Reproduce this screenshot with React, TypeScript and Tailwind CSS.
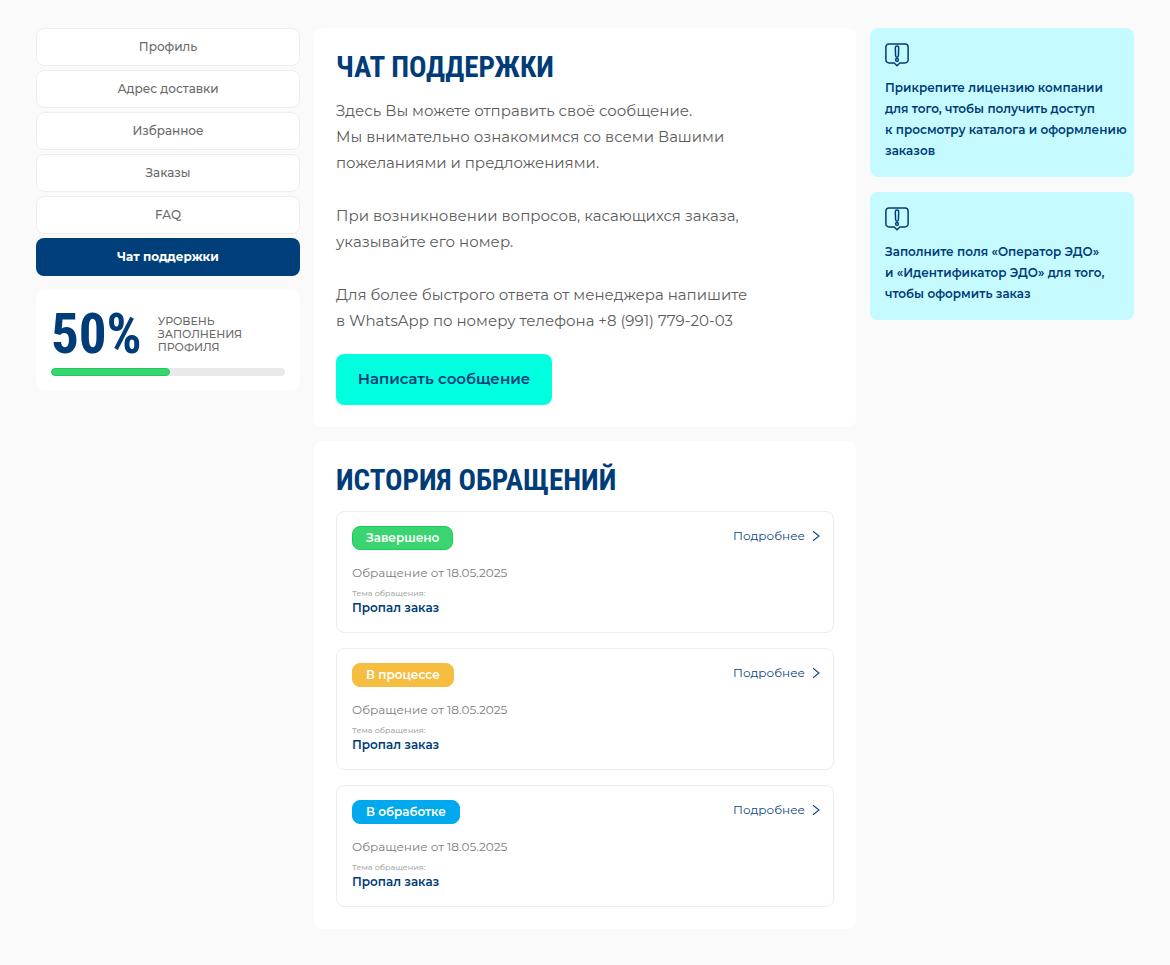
const navItems = ["Профиль", "Адрес доставки", "Избранное", "Заказы", "FAQ", "Чат поддержки"];
const activeItem = "Чат поддержки";

const requests = [
  { id: 1, status: "Завершено", badge: "border-[#16cf58] bg-[#3ad570]", date: "18.05.2025", topic: "Пропал заказ" },
  { id: 2, status: "В процессе", badge: "border-[#f6bd41] bg-[#f6bd41]", date: "18.05.2025", topic: "Пропал заказ" },
  { id: 3, status: "В обработке", badge: "border-[#00a9ee] bg-[#00a9ee]", date: "18.05.2025", topic: "Пропал заказ" },
];

const notices = [
  { id: 1, lines: ["Прикрепите лицензию компании", "для того, чтобы получить доступ", "к просмотру каталога и оформлению", "заказов"] },
  { id: 2, lines: ["Заполните поля «Оператор ЭДО»", "и «Идентификатор ЭДО» для того,", "чтобы оформить заказ"] },
];

const headingClass =
  "font-['Roboto_Condensed','Liberation_Sans',sans-serif] text-[29px] leading-[34px] font-bold text-[#003c78] uppercase";

function NoticeIcon() {
  return (
    <svg width="24" height="24" viewBox="0 0 24 24" fill="none" stroke="#003c78" strokeWidth="1.5" strokeLinejoin="round" aria-hidden="true">
      <path d="M4 .9h16a3.1 3.1 0 0 1 3.1 3.1v12.9A3.1 3.1 0 0 1 20 20h-5.2L12 22.7 9.2 20H4A3.1 3.1 0 0 1 .9 16.9V4A3.1 3.1 0 0 1 4 .9Z" />
      <path d="M10.3 4.8a1.7 1.7 0 0 1 3.4 0l-.3 8a1.4 1.4 0 0 1-2.8 0Z" />
      <circle cx="12" cy="17" r="1.4" />
    </svg>
  );
}

function Sidebar() {
  return (
    <aside className="flex flex-col gap-[14px]">
      <nav className="flex flex-col gap-1" aria-label="Личный кабинет">
        {navItems.map((item) => (
          <a
            key={item}
            href="#"
            aria-current={item === activeItem ? "page" : undefined}
            className={
              item === activeItem
                ? "flex h-[38px] items-center justify-center rounded-lg bg-[#003f7a] text-xs font-bold text-white"
                : "flex h-[38px] items-center justify-center rounded-lg border border-[#ededed] bg-white text-xs font-medium text-[#6a6a6a]"
            }
          >
            {item}
          </a>
        ))}
      </nav>
      <section className="rounded-lg bg-white px-[15px] pt-5 pb-[14px]">
        <div className="flex items-center gap-4">
          <span className="font-['Roboto_Condensed','Liberation_Sans',sans-serif] text-[55px] leading-[48px] font-bold text-[#003c78]">
            50%
          </span>
          <span id="fill-label" className="text-[11px] leading-[13px] font-medium text-[#6a6a6a] uppercase">
            Уровень
            <br />
            заполнения
            <br />
            профиля
          </span>
        </div>
        <div
          role="progressbar"
          aria-labelledby="fill-label"
          aria-valuenow={50}
          className="mt-[10px] h-2 overflow-hidden rounded-full bg-[#e9e9e9]"
        >
          <div className="h-full w-[51%] rounded-full border border-[#16cf58] bg-[#3ad570]" />
        </div>
      </section>
    </aside>
  );
}

function SupportChat() {
  return (
    <section className="rounded-lg bg-white p-[22px]">
      <h1 className={headingClass}>Чат поддержки</h1>
      <div className="mt-[14px] flex flex-col gap-[27px] text-[15px] leading-[26px] text-[#5c5c5c]">
        <p>
          Здесь Вы можете отправить своё сообщение.
          <br />
          Мы внимательно ознакомимся со всеми Вашими
          <br />
          пожеланиями и предложениями.
        </p>
        <p>
          При возникновении вопросов, касающихся заказа,
          <br />
          указывайте его номер.
        </p>
        <p>
          Для более быстрого ответа от менеджера напишите
          <br />в WhatsApp по номеру телефона +8 (991) 779-20-03
        </p>
      </div>
      <button type="button" className="mt-5 block h-[51px] w-[216px] rounded-lg bg-[#00ffdf] text-[15px] font-semibold text-[#003c78]">
        Написать сообщение
      </button>
    </section>
  );
}

function History() {
  return (
    <section className="rounded-lg bg-white p-[22px]">
      <h2 className={headingClass}>История обращений</h2>
      <ul className="mt-[14px] flex flex-col gap-[15px]">
        {requests.map((request) => (
          <li key={request.id} className="flex items-start justify-between rounded-lg border border-[#ededed] py-[14px] pr-[13px] pl-[15px]">
            <div className="flex flex-col items-start">
              <span className={`flex h-6 items-center rounded-lg border px-[13px] text-xs font-semibold text-white ${request.badge}`}>
                {request.status}
              </span>
              <p className="mt-[14px] text-xs leading-[18px] text-[#7c7c7c]">Обращение от {request.date}</p>
              <p className="mt-[6px] text-[8px] leading-[10px] font-medium text-[#a9a9a9]">Тема обращения:</p>
              <p className="mt-[2px] mb-[2px] text-xs leading-4 font-semibold text-[#003c78]">{request.topic}</p>
            </div>
            <a href="#" className="flex items-center gap-[7px] text-xs leading-5 text-[#0f4880]">
              Подробнее
              <svg width="8" height="12" viewBox="0 0 8 12" fill="none" stroke="#0f4880" strokeWidth="1.1" aria-hidden="true">
                <path d="M1 1.2 7 6 1 10.8" />
              </svg>
            </a>
          </li>
        ))}
      </ul>
    </section>
  );
}

function Notices() {
  return (
    <aside className="flex flex-col gap-[15px]">
      {notices.map((notice) => (
        <section key={notice.id} className="rounded-lg bg-[#c5fbff] pt-[15px] pr-1 pb-4 pl-[15px]">
          <NoticeIcon />
          <p className="mt-[10px] text-xs leading-[21px] font-semibold whitespace-pre-line text-[#003c78]">{notice.lines.join("\n")}</p>
        </section>
      ))}
    </aside>
  );
}

export default function App() {
  return (
    <div className="min-h-screen bg-[#fafafa] px-9 py-7 font-['Montserrat','Inter','Noto_Sans',sans-serif]">
      <div className="grid items-start gap-[14px] lg:grid-cols-[264px_1fr_264px]">
        <Sidebar />
        <main className="flex flex-col gap-[14px]">
          <SupportChat />
          <History />
        </main>
        <Notices />
      </div>
    </div>
  );
}
